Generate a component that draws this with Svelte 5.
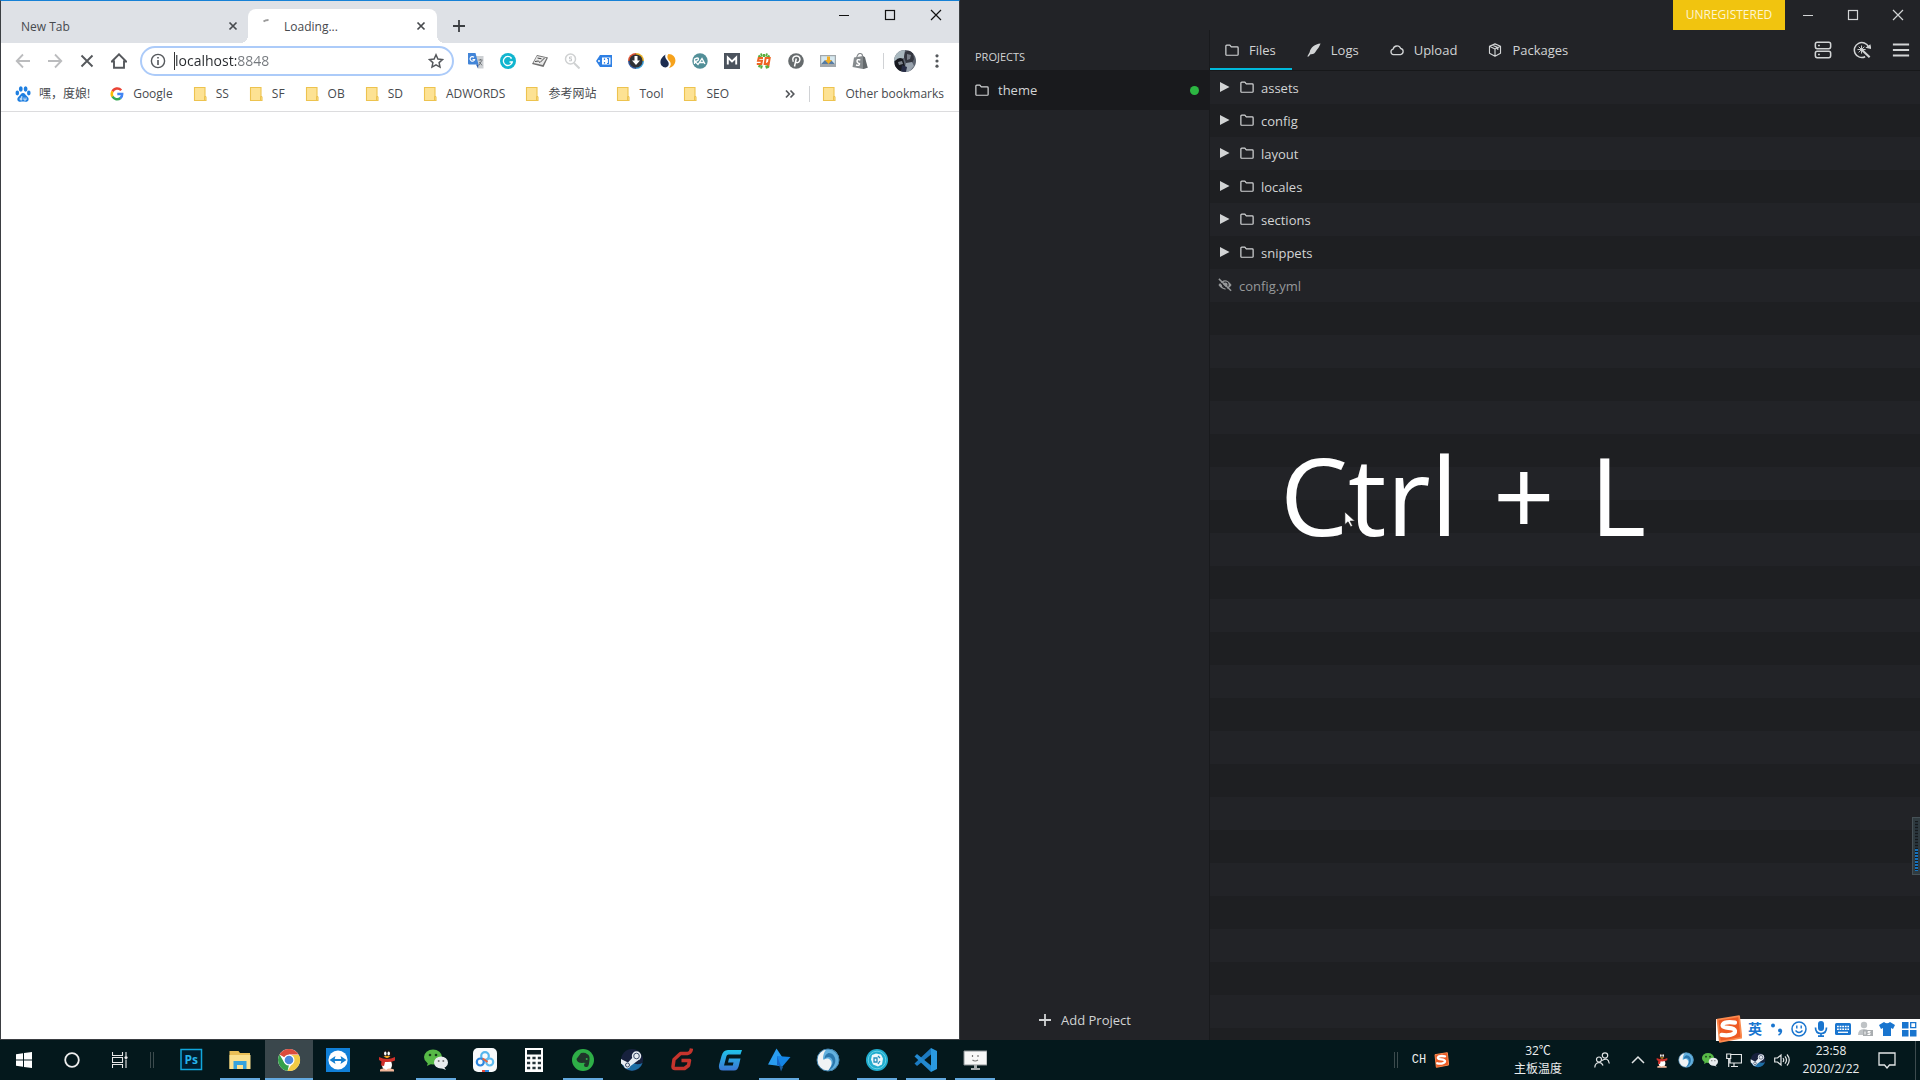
<script lang="ts">
  type Glyph = { box: number; art: string };

  const qq = '<ellipse cx="12" cy="8" rx="5.5" ry="6.5" fill="#151515"/><ellipse cx="12" cy="15" rx="7" ry="7" fill="#151515"/><ellipse cx="12" cy="17" rx="5" ry="5.5" fill="#fff"/><ellipse cx="10.3" cy="5.4" rx="1.2" ry="2" fill="#fff"/><ellipse cx="13.7" cy="5.4" rx="1.2" ry="2" fill="#fff"/><path d="M8.500 8.500q3.500-1.500 7 0l-3.500 1.800z" fill="#f6a623"/><path d="M4 9q8 4 16 0v3.500q-4 2-10 1.500l-1 4-3-.5.500-4L4 12z" fill="#d0302a"/><path d="M5 21.500q4-2 6 .5 3-2.500 8-.5v2H5z" fill="#f3b79a"/>';
  const wechat = '<ellipse cx="9" cy="9" rx="9" ry="7.500" fill="#57b947"/><path d="M4 14l-1 4 4-2z" fill="#57b947"/><circle cx="6" cy="7" r="1.300" fill="#163b18"/><circle cx="12" cy="7" r="1.300" fill="#163b18"/><ellipse cx="17" cy="14.500" rx="7" ry="6" fill="#e9ecee"/><path d="M20 19l2 3-5-2z" fill="#e9ecee"/><circle cx="14.700" cy="13" r="1" fill="#777"/><circle cx="19.300" cy="13" r="1" fill="#777"/>';
  const steam = '<circle cx="12" cy="12" r="11" fill="#17213d"/><path d="M1.500 15a11 11 0 0 0 21 0q-6 3-10-1z" fill="#1d6ea5"/><path d="M1 11l7 3.500 6-6.500 4 4.500-7.500 5.500a3.500 3.500 0 0 1-6.800-.5L1 15.500z" fill="#e8edf2"/><circle cx="16.500" cy="8" r="4.700" fill="#e8edf2"/><circle cx="16.500" cy="8" r="2.800" fill="none" stroke="#3b4a66" stroke-width="1"/><circle cx="7.500" cy="17" r="2" fill="none" stroke="#3b4a66"/>';
  const wave = '<circle cx="12" cy="12" r="11" fill="#f1f3f4"/><path d="M10 1.500C19-1 26 8 22 16.500 19 23 14 23 12 23c4-5 5-10 1-12-3-1.500-4 1-6 .5C7 6 9 3 10 1.500z" fill="#63b1df"/><path d="M12.500 5c5 0 8 5 6.500 10-1 3-3 6-7 8 5-6 6-10 3-13-2-2-5-1-6.500 1 0-3 1.500-5 4-6z" fill="#2a77ad"/><circle cx="12" cy="12" r="11" fill="none" stroke="#3c7ea9" stroke-width="1"/>';
  const sogou = '<path d="M3 4 21.500 1l2 18.500L5 23z" fill="#ee5a24" stroke="#fa8a4f" stroke-width="1.500" stroke-linejoin="round"/><path d="M18 6.500C10 5 6.500 7.500 7.500 9.500c1 2.500 10 .5 10.500 4 .4 3.500-6 4.500-11.500 3.500" fill="none" stroke="#fff" stroke-width="3.600" stroke-linecap="round"/>';

  const icons: Record<string, Glyph> = {
    folder: { box: 16, art: '<path d="M1 13V3.500Q1 2.500 2 2.500h3.500l1.700 2H14q1 0 1 1V13q0 1-1 1H2q-1 0-1-1z" fill="none" stroke="currentColor" stroke-width="1.400"/>' },
    feather: { box: 16, art: '<path d="M15.500.5C9 1 4 5 3 10.500L.3 15.500h1.600L4 12.800c3.500.2 5-1 6-3 .8-1.500 1.500-2 2.500-3.500 1.300-1.800 2-3.500 3-5.800z" fill="currentColor"/>' },
    cloud: { box: 16, art: '<path d="M4 13.200a3.200 3.200 0 0 1-.4-6.300 4.500 4.500 0 0 1 8.600-.6 3.500 3.500 0 0 1-.2 6.900z" fill="none" stroke="currentColor" stroke-width="1.500"/>' },
    cube: { box: 16, art: '<path d="M8 1l6.300 2.700v8L8 15.200l-6.300-3.500v-8zM1.700 3.700 8 6.800l6.300-3.100M8 6.800v8.400M4.800 2.300l6.400 3V8" fill="none" stroke="currentColor" stroke-width="1.300" stroke-linejoin="round"/>' },
    server: { box: 20, art: '<rect x="1.500" y="1.500" width="17" height="7" rx="2" fill="none" stroke="currentColor" stroke-width="1.700"/><rect x="1.500" y="11.500" width="17" height="7" rx="2" fill="none" stroke="currentColor" stroke-width="1.700"/><path d="M4.500 5h2M4.500 15h2" stroke="currentColor" stroke-width="1.500"/>' },
    refresh: { box: 20, art: '<path d="M13.500 17.500A8.300 8.300 0 1 1 17.300 6.500" fill="none" stroke="currentColor" stroke-width="1.700"/><path d="M13.800 7.500 20.500 9 19.300 3.500z" fill="currentColor"/><path d="M9.500 5v9M5 9.500h9M6.300 6.300l6.400 6.400M12.700 6.300l-6.400 6.400" stroke="currentColor" stroke-width="1.100"/><path d="M10 10 18.500 18" stroke="currentColor" stroke-width="2.400"/>' },
    menu: { box: 20, art: '<path d="M1 4h18M1 10h18M1 16h18" stroke="currentColor" stroke-width="2.200"/>' },
    triangle: { box: 10, art: '<path d="M0 0l9.500 5L0 10z" fill="currentColor"/>' },
    hidden: { box: 16, art: '<path d="M.5 8q7.500-11 15 0-7.500 10-15 0z" fill="currentColor"/><circle cx="8.300" cy="7.800" r="3.300" fill="none" stroke="#222327" stroke-width="1.200"/><path d="M1 3.500 13 15.500" stroke="#222327" stroke-width="1.500"/><path d="M1 1 15 14.500" stroke="currentColor" stroke-width="1.600"/>' },
    plus: { box: 14, art: '<path d="M7 1v12M1 7h12" stroke="currentColor" stroke-width="1.800"/>' },
    minimize: { box: 12, art: '<path d="M1 6.500h10" stroke="currentColor" stroke-width="1"/>' },
    maximize: { box: 12, art: '<rect x="1.500" y="1.500" width="9" height="9" fill="none" stroke="currentColor" stroke-width="1.200"/>' },
    cross: { box: 12, art: '<path d="M1 1l10 10M11 1 1 11" stroke="currentColor" stroke-width="1.200"/>' },
    tabclose: { box: 12, art: '<path d="M2.500 2.500l7 7M9.500 2.500l-7 7" stroke="currentColor" stroke-width="1.700"/>' },
    spinner: { box: 16, art: '<path d="M5.500 3.500Q7.500 2 10.500 2" fill="none" stroke="#9a9a9a" stroke-width="1.800"/>' },
    back: { box: 16, art: '<path d="M15 8H2M8 1.500 1.700 8 8 14.500" fill="none" stroke="#bbbcbe" stroke-width="1.800"/>' },
    forward: { box: 16, art: '<path d="M1 8h13M8 1.500 14.300 8 8 14.500" fill="none" stroke="#bbbcbe" stroke-width="1.800"/>' },
    stop: { box: 16, art: '<path d="M2.500 2.500l11 11M13.500 2.500l-11 11" stroke="#55585c" stroke-width="1.900"/>' },
    home: { box: 16, art: '<path d="M.8 8.500 8 1.300l7.200 7.200H13v6.300H3V8.500z" fill="none" stroke="#55585c" stroke-width="1.900"/>' },
    info: { box: 16, art: '<circle cx="8" cy="8" r="6.600" fill="none" stroke="#55585c" stroke-width="1.400"/><path d="M8 7v5M8 4v1.600" stroke="#55585c" stroke-width="1.600"/>' },
    star: { box: 16, art: '<path d="M8 1.800l1.900 4.200 4.600.5-3.400 3.100.9 4.500L8 11.800 4 14.100l.9-4.500L1.500 6.500 6.100 6z" fill="none" stroke="#55585c" stroke-width="1.500"/>' },
    dots: { box: 16, art: '<circle cx="8" cy="2.800" r="1.600" fill="#55585c"/><circle cx="8" cy="8" r="1.600" fill="#55585c"/><circle cx="8" cy="13.200" r="1.600" fill="#55585c"/>' },
    more: { box: 16, art: '<path d="M4 4.500 7.300 8 4 11.500M8.500 4.500 11.800 8l-3.300 3.500" fill="none" stroke="#55585c" stroke-width="1.700"/>' },
    paw: { box: 16, art: '<g fill="#1f7fe0"><ellipse cx="5.800" cy="3" rx="1.900" ry="2.700"/><ellipse cx="10.600" cy="3" rx="1.900" ry="2.700"/><ellipse cx="2.300" cy="7" rx="1.800" ry="2.400"/><ellipse cx="13.800" cy="7" rx="1.800" ry="2.400"/><path d="M8 7c2 0 2.500 2 4 3.200 3 2.500 1.500 5.800-1.500 5.500-2-.2-3-.2-5 0-3 .3-4.500-3-1.500-5.500C5.500 9 6 7 8 7z"/></g><path d="M6.800 10v4H5.500q-1-1 0-2h1.300M9 11.500V14h2v-2.500" fill="none" stroke="#fff" stroke-width=".8"/>' },
    google: { box: 16, art: '<g fill="none" stroke-width="2.500"><path d="M12.200 4.200A5.200 5.200 0 0 0 3.500 5.500" stroke="#ea4335"/><path d="M3.500 5.300a5.400 5.400 0 0 0 0 5.400" stroke="#fbbc05"/><path d="M3.500 10.500a5.200 5.200 0 0 0 8 1.500" stroke="#34a853"/><path d="M11.300 12.200A5.200 5.200 0 0 0 13.200 8H8.300" stroke="#4285f4"/></g>' },
    bookmark: { box: 16, art: '<path d="M2.500 1.500h10.500v9l1 .5v3.500H2.500z" fill="#fde293" stroke="#edc34f" stroke-width="1.100"/><path d="M14 10.500h-1.500v4" fill="none" stroke="#edc34f"/>' },
    translate: { box: 16, art: '<path d="M7 3h8.500v12.500H10z" fill="#cdd0d3"/><path d="M0 0h7.500l3 11.500H1q-1 0-1-1z" fill="#4285d8"/><path d="M10.500 11.500 8 11.500 10 15.500z" fill="#2b5caa"/><path d="M6 4.200a2.300 2.300 0 1 0 .6 2.300H4.500" fill="none" stroke="#fff" stroke-width="1.200"/><path d="M10.500 7h4M12.500 6v1M13.800 7.500l-3 5M11.300 9l2.700 3.300" stroke="#6b6f73" stroke-width=".9"/>' },
    grammar: { box: 16, art: '<circle cx="8" cy="8" r="8" fill="#11b5cf"/><path d="M11.300 5A4.500 4.500 0 1 0 12.300 9H9.500M11 4v2" fill="none" stroke="#fff" stroke-width="1.300"/>' },
    kitbox: { box: 16, art: '<path d="M5 2 16 4.500 11.500 14 0 11z" fill="#6f6f6f"/><path d="M5 3 14.500 5 10.700 12 1.500 10z" fill="#e9e9e9"/><path d="M3 8.500q4-1.500 5 1L12.500 5M5.500 5l4 .8" fill="none" stroke="#444" stroke-width="1"/>' },
    search: { box: 16, art: '<circle cx="6.500" cy="6" r="5" fill="none" stroke="#cfd1d2" stroke-width="1.500"/><path d="M10 10l5.500 5.500" stroke="#cfd1d2" stroke-width="2"/><path d="M8 4H5.500v1.800h2v2H5" fill="none" stroke="#c4c6c8"/>' },
    tag: { box: 16, art: '<path d="M4 2h12v12H4L0 8z" fill="#2f80e4"/><circle cx="3" cy="8" r="1" fill="#fff"/><path d="M6 4.500h8.500v7H6z" fill="#fff"/><path d="M8.500 5.500v1.500M8.500 9v1.500M11 5.500h1.500v5H11" fill="none" stroke="#2f80e4" stroke-width="1.200"/>' },
    download: { box: 16, art: '<path d="M8 0a8 8 0 0 1 8 8H8z" fill="#e6af25"/><path d="M16 8a8 8 0 0 1-8 8V8z" fill="#3fa0d8"/><path d="M0 8a8 8 0 0 1 8-8v8z" fill="#d95232"/><path d="M8 16a8 8 0 0 1-8-8h8z" fill="#35599d"/><circle cx="8" cy="8" r="6.600" fill="#2f3136"/><path d="M6.500 3h3v4.500H12L8 12 4 7.500h2.500z" fill="#fff"/>' },
    swirl: { box: 16, art: '<path d="M5.500 1.500C4 5.500 7.500 7 8.500 9.500c.8 2.500-.5 4.500-3 5C-.5 14-2 6 5.500 1.500z" fill="#1d2d50"/><path d="M8.500 1C15 1 17.500 8 13.500 12.500 12 14 10 15 9 15c3-3.500 1.500-6 0-7.500S6.500 3 8.500 1z" fill="#f6a21c"/>' },
    rank: { box: 16, art: '<circle cx="8" cy="8" r="7.700" fill="#528f98"/><path d="M2.500 11V6q4-2 4 0T3 8.500l3 3 4-6 3 5.500M7 9.500h5" fill="none" stroke="#fff" stroke-width="1.300"/>' },
    moz: { box: 16, art: '<path d="M0 0h16v16H0z" fill="#4b535d"/><path d="M3.800 11.500v-7L8 8.500l4.200-4v7" fill="none" stroke="#fff" stroke-width="1.900"/>' },
    quake: { box: 16, art: '<path d="M5 .5l1 3M11 .5l-1 3M8 1v3M2.500 2.500l2 2M13.500 2.500l-2 2M5 15.500l1-3M11 15.500l-1-3M2.500 14l2-2M13 14.500l-2-2" stroke="#57ad3c" stroke-width="2"/><path d="M7 5H2.700L2 7.700h4L5.300 11H.8" fill="none" stroke="#ee6523" stroke-width="2"/><path d="M9.700 5h4l-1 6H8.700z" fill="#fff" stroke="#ee6523" stroke-width="2"/><path d="M11 9.500l2 3.500" stroke="#ee6523" stroke-width="1.600"/>' },
    pin: { box: 16, art: '<circle cx="8" cy="8" r="7.800" fill="#666b6d"/><path d="M5.300 8.800C3.500 5 6 3 8.500 3c3 0 4.200 2.500 3 5-1 2-3 2-3.500 1M8.300 5.500 6.500 13.500" fill="none" stroke="#fff" stroke-width="1.500"/>' },
    photo: { box: 16, art: '<path d="M0 2h16v12H0z" fill="#a2a8ac"/><path d="M1.200 3.200h13.600V11H1.200z" fill="#d6e8ef"/><path d="M1.200 11 5 7l3 2 3-2 3.800 4z" fill="#577ca3"/><path d="M7 3.500h3V7h2L8.500 11 5 7h2z" fill="#f3ae25"/>' },
    bag: { box: 16, art: '<path d="M2 4.500 11 3l4.500 11.500L11 16 .5 14z" fill="#868b8e"/><path d="M11 3l2 1.300 2.700 10.500L11 16z" fill="#64696c"/><path d="M4.500 5Q6 0 8.500.5T10.500 4" fill="none" stroke="#868b8e" stroke-width="1.200"/><path d="M8.300 7Q5 6 5 8t2.500 2.700q0 2.500-3.500 1.300" fill="none" stroke="#fff" stroke-width="1.400"/>' },
    avatar: { box: 22, art: '<defs><clipPath id="face"><circle cx="11" cy="11" r="11"/></clipPath></defs><g clip-path="url(#face)"><path d="M0 0h22v22H0z" fill="#5d6470"/><path d="M0 0h11L10 8 0 11z" fill="#a9b8bf"/><path d="M11 2q5-3 8 1l1 6-3 6-5-2-2-6z" fill="#343740"/><path d="M13 4l4 1-1 4-3 1z" fill="#7a808a"/><path d="M1 11q4-5 8-2l2 7-5 6H0z" fill="#17191f"/><path d="M4 12l4-1 1 3-4 1z" fill="#7d838b"/><path d="M12 13l6-1 2 4-5 6h-5z" fill="#99a3ae"/><path d="M8 15l5 2-1 5H7z" fill="#262b44"/></g>' },
    windows: { box: 16, art: '<path d="M0 2.300 7 1.300v6.300H0zM8 1.100 16 0v7.600H8zM0 8.500h7v6.300l-7-1zM8 8.500h8V16l-8-1.100z" fill="#fff"/>' },
    cortana: { box: 16, art: '<circle cx="8" cy="8" r="6.800" fill="none" stroke="#eee" stroke-width="1.800"/>' },
    taskview: { box: 16, art: '<path d="M.5 0v3.500h10V0M.5 16v-3.500h10V16M.5 5.500h10v5H.5zM14 0v4M14 7.500V16" fill="none" stroke="#e7e7e7" stroke-width="1.100"/><circle cx="14" cy="5.500" r="1.600" fill="#e7e7e7"/>' },
    ps: { box: 24, art: '<rect x="2" y="1.500" width="20.500" height="20" fill="#001d2e" stroke="#11a6dc" stroke-width="1.500"/><text x="12.200" y="16" font-size="12" font-weight="700" font-family="Open Sans,sans-serif" text-anchor="middle" fill="#26b4ea">Ps</text>' },
    explorer: { box: 24, art: '<path d="M1.500 3h9l1.500 2h10v16h-20.500z" fill="#eabf57"/><path d="M1.500 7h21v14h-21z" fill="#fbe08e"/><path d="M5.500 21v-8h13v8H15v-4H9v4z" fill="#35a2dd"/>' },
    chrome: { box: 24, art: '<circle cx="12" cy="12" r="11" fill="#fff"/><path d="M12 12 2.500 6.500A11 11 0 0 1 21.500 6.500H12z" fill="#dc4b3d"/><path d="M2.500 6.500 7.500 15 12 17 10.500 22.900A11 11 0 0 1 2.500 6.500z" fill="#35a04a"/><path d="M12 7h9.800a11 11 0 0 1-11.300 15.900L16.500 13z" fill="#f2cb45"/><path d="M12 6.500a5.500 5.500 0 1 0 0 11 5.500 5.500 0 1 0 0-11z" fill="#fff"/><circle cx="12" cy="12" r="4.300" fill="#4c87dc"/>' },
    teamviewer: { box: 24, art: '<path d="M0 0h24v24H0z" fill="#107fd7"/><circle cx="12" cy="12" r="9.600" fill="#fff"/><path d="M3.500 12l6-4-.8 3h6.600l-.8-3 6 4-6 4 .8-3H8.700l.8 3z" fill="#157fcf"/>' },
    qq: { box: 24, art: qq },
    wechat: { box: 24, art: wechat },
    baidu: { box: 24, art: '<rect width="24" height="24" rx="5" fill="#f8fafb"/><circle cx="12" cy="8" r="3.800" fill="none" stroke="#55b6ed" stroke-width="2.200"/><circle cx="7.300" cy="14" r="3.500" fill="none" stroke="#2d86de" stroke-width="2.200"/><circle cx="16.700" cy="14" r="3.500" fill="none" stroke="#62bdf0" stroke-width="2.200"/><path d="M9.500 10.500 12 12l2.500 2" fill="none" stroke="#e7653c" stroke-width="2"/><path d="M9 23h3" stroke="#e74a38" stroke-width="2"/><path d="M12 23h4" stroke="#2d86de" stroke-width="2"/>' },
    calculator: { box: 24, art: '<path d="M3 0h18v24H3z" fill="#fff"/><path d="M5 2h14v4.500H5z" fill="#0a1a20"/><path d="M5 10h14M5 15h14M5 20h14" stroke="#26343a" stroke-width="2.500" stroke-dasharray="3.200 2.200"/>' },
    evernote: { box: 24, art: '<circle cx="12" cy="12" r="11" fill="#2eae47"/><path d="M7 9l3-4q4-1 6 1 3 1 2.500 6T17 18.500q-4 1.500-4-1.500 0-2 2-2-3-.5-4 0-5 0-5.500-4z" fill="#20352b"/><circle cx="15.700" cy="11" r="1" fill="#2eae47"/>' },
    steam: { box: 24, art: steam },
    gred: { box: 24, art: '<path d="M22.500.5Q22 5 18.500 5.500H11.500L5 11.500 4 18.500q0 2 2 2h9.500l4-3 1-5H12.500" fill="none" stroke="#c5342d" stroke-width="3.500" stroke-linejoin="round"/>' },
    gblue: { box: 24, art: '<defs><linearGradient id="gb" x1="0" y1="0" x2="0" y2="1"><stop offset="0" stop-color="#20c3e9"/><stop offset="1" stop-color="#3b77d4"/></linearGradient></defs><path d="M24 2H10Q5 2 3.500 8L1 17q-1 5.500 4 5.500h11q4 0 5-5.500l1.500-6.500H11l-1 4h5.500l-.7 3H6L8.500 8q.4-1.500 2-1.500H22.500z" fill="url(#gb)"/>' },
    bird: { box: 24, art: '<path d="M9.500.5l6 9L13 18 1 16.500z" fill="#2a9df0"/><path d="M10 8l13.500 1-8.500 10-5-2z" fill="#1485e6"/><path d="M10 8l4 10-4-1z" fill="#1667c9"/><path d="M12 17l4 2-2 4.500z" fill="#1b5c9c"/>' },
    wave: { box: 24, art: wave },
    disc: { box: 24, art: '<circle cx="12" cy="12" r="11" fill="#20adcf"/><circle cx="12" cy="12" r="8.800" fill="none" stroke="#66d1e5" stroke-width="1"/><path d="M7 7l4-1.500 5 1 2 4-1 6-4 2-5-2-2-5z" fill="#ecf7fb"/><path d="M9 10h3v4H9zM13 8l2 2M13 16l2-3" fill="none" stroke="#258fbc" stroke-width="1.300"/>' },
    vscode: { box: 24, art: '<path d="M17 0 23 3v18l-6 3z" fill="#2a99e0"/><path d="M17 0v6.500L3 18 .5 15.500z" fill="#1c7ac0"/><path d="M17 24v-6.500L3 6 .5 8.500z" fill="#2389d0"/>' },
    monitor: { box: 24, art: '<path d="M1 3h23v14H1z" fill="#f7f7f7" stroke="#8c9295"/><path d="M9.500 7v2M15 7v2M9.500 12q2.500 2 5.500 0" fill="none" stroke="#777" stroke-width="1.200"/><path d="M11 17h3v3h3v2H8v-2h3z" fill="#a5aaac"/>' },
    sogou: { box: 24, art: sogou },
    people: { box: 16, art: '<g fill="none" stroke="#e2e5e6" stroke-width="1.200"><circle cx="5" cy="7.500" r="2.500"/><path d="M.8 15.500Q1 11 5 10.500q3 0 4 3"/><circle cx="11" cy="3.500" r="2.700"/><path d="M8 8.500q6-4 7.300 3"/></g>' },
    chevron: { box: 16, art: '<path d="M2 11l6-6 6 6" fill="none" stroke="#e2e5e6" stroke-width="1.500"/>' },
    network: { box: 16, art: '<path d="M5 2.500h10.500v8.500H4V7M8 11v3.500M5 14.500h7M.7 2h4v4.500h-4zM2.700 6.500V15" fill="none" stroke="#e2e5e6" stroke-width="1.200"/>' },
    speaker: { box: 16, art: '<path d="M.7 6h2.800L7 3v10L3.500 10H.7zM9 6q1.500 2 0 4M11 4.300q3 3.700 0 7.400M13 2.500q4.500 5.500 0 11" fill="none" stroke="#e2e5e6" stroke-width="1.200"/>' },
    notice: { box: 18, art: '<path d="M1 2h16v12h-5.500L9 17l-2.500-3H1z" fill="none" stroke="#e2e5e6" stroke-width="1.300"/>' },
    punctuation: { box: 16, art: '<circle cx="4" cy="4.500" r="2" fill="#1975cf"/><circle cx="11" cy="9.500" r="2" fill="#1975cf"/><path d="M12.500 9.500q0 3-3 4.500" fill="none" stroke="#1975cf" stroke-width="1.500"/>' },
    smile: { box: 16, art: '<circle cx="8" cy="8" r="7" fill="none" stroke="#1975cf" stroke-width="1.500"/><path d="M5.800 4.500v3M10.200 4.500v3M4.500 9.500q3.500 4 7 0" fill="none" stroke="#1975cf" stroke-width="1.400"/>' },
    mic: { box: 16, art: '<rect x="5" y="0" width="6" height="10" rx="3" fill="#1975cf"/><path d="M2.500 6.500q0 6 5.500 6t5.500-6M8 12v3M5 15.200h6" fill="none" stroke="#1975cf" stroke-width="1.700"/>' },
    keyboard: { box: 16, art: '<rect y="2" width="16" height="12" rx="1.500" fill="#1975cf"/><path d="M2 5.500h12M2 8.200h12" stroke="#fff" stroke-width="1.500" stroke-dasharray="1.800 .8"/><path d="M3 11.300h10" stroke="#fff" stroke-width="1.300"/>' },
    person: { box: 16, art: '<circle cx="7" cy="4" r="3.200" fill="#bfc3c6"/><path d="M1 14q0-6 6-6t6 6z" fill="#bfc3c6"/><rect x="6" y="9" width="10" height="6" fill="#a9adb0"/><path d="M8 10.500v3M13.500 10.500H11v1.300h2v1.700h-2.500" fill="none" stroke="#fff"/>' },
    shirt: { box: 16, art: '<path d="M5 1q3 2.500 6 0l5 3-2 4-2-1v8H4V7L2 8 0 4z" fill="#1975cf"/>' },
    grid: { box: 16, art: '<path d="M1 1h6.500v6.500H1zM1 9h6.500v6.500H1zM9 9h6.500v6.500H9z" fill="#1975cf"/><path d="M9.700 1.700h5v5h-5z" fill="none" stroke="#1975cf" stroke-width="1.300"/>' },
    cursor: { box: 20, art: '<path d="M1 1v14l3.500-3 3 5.500 2-1-2.700-5.300H12z" fill="#fff" stroke="#222" stroke-width=".7"/>' }
  };

  const extensions = [
    ['translate', 'Translate'], ['grammar', 'Grammar check'], ['kitbox', 'Toolkit'], ['search', 'Keyword search'],
    ['tag', 'Tag assistant'], ['download', 'Downloader'], ['swirl', 'Site traffic'], ['rank', 'Rank checker'],
    ['moz', 'Moz'], ['quake', 'SEO overview'], ['pin', 'Pinterest'], ['photo', 'Image saver'], ['bag', 'Shopify']
  ];
  const bookmarks = [
    ['paw', '嘿，度娘!'], ['google', 'Google'], ['bookmark', 'SS'], ['bookmark', 'SF'], ['bookmark', 'OB'],
    ['bookmark', 'SD'], ['bookmark', 'ADWORDS'], ['bookmark', '参考网站'], ['bookmark', 'Tool'], ['bookmark', 'SEO']
  ];
  const views = [['folder', 'Files'], ['feather', 'Logs'], ['cloud', 'Upload'], ['cube', 'Packages']];
  const folders = ['assets', 'config', 'layout', 'locales', 'sections', 'snippets'];
  const apps = [
    { icon: 'ps', name: 'Photoshop', state: '' }, { icon: 'explorer', name: 'File Explorer', state: 'open' },
    { icon: 'chrome', name: 'Chrome', state: 'open active' }, { icon: 'teamviewer', name: 'TeamViewer', state: '' },
    { icon: 'qq', name: 'QQ', state: '' }, { icon: 'wechat', name: 'WeChat', state: 'open' },
    { icon: 'baidu', name: 'Baidu Netdisk', state: '' }, { icon: 'calculator', name: 'Calculator', state: '' },
    { icon: 'evernote', name: 'Evernote', state: 'open' }, { icon: 'steam', name: 'Steam', state: '' },
    { icon: 'gred', name: 'Game client', state: '' }, { icon: 'gblue', name: 'Game booster', state: '' },
    { icon: 'bird', name: 'Mail', state: 'open' }, { icon: 'wave', name: 'Browser', state: '' },
    { icon: 'disc', name: 'Prepros', state: 'open' }, { icon: 'vscode', name: 'Visual Studio Code', state: 'open' },
    { icon: 'monitor', name: 'Screen recorder', state: 'open' }
  ];
  const tray = [['chevron', 'Show hidden icons'], ['qq', 'QQ'], ['wave', 'Browser'], ['wechat', 'WeChat'], ['network', 'Network'], ['steam', 'Steam'], ['speaker', 'Volume']];
  const imeTools = [['punctuation', 'Punctuation'], ['smile', 'Emoji'], ['mic', 'Voice input'], ['keyboard', 'Keyboard'], ['person', 'Account'], ['shirt', 'Skins'], ['grid', 'Toolbox']];

  let address = $state('localhost:8848');
  let view = $state('Files');
</script>

{#snippet icon(name: string, size = 's16')}
  <svg class="icon {size}" viewBox="0 0 {icons[name].box} {icons[name].box}" aria-hidden="true">{@html icons[name].art}</svg>
{/snippet}

{#snippet windowButtons()}
  <div class="winbtns">
    <button aria-label="Minimize">{@render icon('minimize', 's12')}</button>
    <button aria-label="Maximize">{@render icon('maximize', 's12')}</button>
    <button aria-label="Close">{@render icon('cross', 's12')}</button>
  </div>
{/snippet}

<div class="desktop">
  <section class="browser">
    <div class="tabstrip">
      <div class="tab first">
        <button class="tabname">New Tab</button>
        <button class="x" aria-label="Close New Tab">{@render icon('tabclose', 's12')}</button>
      </div>
      <div class="tab current">
        {@render icon('spinner')}
        <button class="tabname">Loading...</button>
        <button class="x" aria-label="Close Loading">{@render icon('tabclose', 's12')}</button>
      </div>
      <button class="newtab" aria-label="New tab">{@render icon('plus', 's14')}</button>
      {@render windowButtons()}
    </div>

    <div class="toolbar">
      <button aria-label="Back">{@render icon('back')}</button>
      <button aria-label="Forward">{@render icon('forward')}</button>
      <button aria-label="Stop">{@render icon('stop')}</button>
      <button aria-label="Home">{@render icon('home')}</button>
      <div class="omnibox">
        {@render icon('info')}
        <span class="caret"></span>
        <input aria-label="Address" bind:value={address} spellcheck="false" />
        <button aria-label="Bookmark this page">{@render icon('star')}</button>
      </div>
      <div class="extensions">
        {#each extensions as [name, label]}
          <button aria-label={label}>{@render icon(name)}</button>
        {/each}
      </div>
      <span class="rule"></span>
      <button class="profile" aria-label="Profile">{@render icon('avatar', 's22')}</button>
      <button aria-label="Menu">{@render icon('dots')}</button>
    </div>

    <nav class="bookmarks">
      {#each bookmarks as [name, label]}
        <a href="#bookmark">{@render icon(name)}<span>{label}</span></a>
      {/each}
      <button class="more" aria-label="More bookmarks">{@render icon('more')}</button>
      <span class="rule"></span>
      <a href="#bookmark">{@render icon('bookmark')}<span>Other bookmarks</span></a>
    </nav>
    <main class="page"></main>
  </section>

  <section class="workbench">
    <header class="titlebar">
      <button class="badge">UNREGISTERED</button>
      {@render windowButtons()}
    </header>
    <aside class="sidebar">
      <h2>PROJECTS</h2>
      <button class="project">{@render icon('folder', 's14')}<span>theme</span><i class="dot"></i></button>
      <button class="add">{@render icon('plus', 's14')}<span>Add Project</span></button>
    </aside>
    <div class="content">
      <div class="views">
        {#each views as [name, label]}
          <button class:selected={view === label} onclick={() => (view = label)}>{@render icon(name, 's14')}<span>{label}</span></button>
        {/each}
        <div class="actions">
          <button aria-label="Server">{@render icon('server', 's18')}</button>
          <button aria-label="Reload">{@render icon('refresh', 's18')}</button>
          <button aria-label="Menu">{@render icon('menu', 's18')}</button>
        </div>
      </div>
      <div class="files">
        {#each folders as name}
          <button class="row">{@render icon('triangle', 's10')}{@render icon('folder', 's14')}<span>{name}</span></button>
        {/each}
        <button class="row muted">{@render icon('hidden', 's14')}<span>config.yml</span></button>
        <div class="shortcut"><span>Ctrl</span><span>+</span><span>L</span></div>
        <div class="pointer">{@render icon('cursor', 's18')}</div>
      </div>
    </div>
    <div class="meter"><span></span></div>
    <div class="ime">
      <div class="imelogo">{@render icon('sogou', 's28')}</div>
      <button class="lang">英</button>
      {#each imeTools as [name, label]}
        <button aria-label={label}>{@render icon(name)}</button>
      {/each}
    </div>
  </section>

  <footer class="taskbar">
    <button class="sys" aria-label="Start">{@render icon('windows')}</button>
    <button class="sys" aria-label="Cortana">{@render icon('cortana')}</button>
    <button class="sys" aria-label="Task View">{@render icon('taskview')}</button>
    <span class="grip"></span>
    <div class="apps">
      {#each apps as app}
        <button class="app {app.state}" aria-label={app.name}>{@render icon(app.icon, 's24')}</button>
      {/each}
    </div>
    <div class="status">
      <span class="grip"></span>
      <button class="ch">CH</button>
      <button class="sg" aria-label="Sogou">{@render icon('sogou')}</button>
      <div class="stack temp"><span>32℃</span><span>主板温度</span></div>
      <button class="people" aria-label="People">{@render icon('people')}</button>
      <div class="tray">
        {#each tray as [name, label]}
          <button aria-label={label}>{@render icon(name)}</button>
        {/each}
      </div>
      <div class="stack clock"><span>23:58</span><span>2020/2/22</span></div>
      <button class="notice" aria-label="Notifications">{@render icon('notice', 's18')}</button>
      <span class="peek"></span>
    </div>
  </footer>
</div>

<style>
  :global(body) { margin: 0; overflow: hidden; }
  .desktop {
    display: grid;
    grid-template: minmax(0, 1fr) 40px / minmax(0, 1fr) minmax(0, 1fr);
    height: 100vh;
    font: 13px/18px "Open Sans", "Noto Sans CJK SC", sans-serif;
    background: #222327;
  }
  button {
    display: flex;
    align-items: center;
    justify-content: center;
    flex: none;
    margin: 0;
    padding: 0;
    border: 0;
    background: none;
    color: inherit;
    font: inherit;
    white-space: nowrap;
  }
  .icon { display: block; flex: none; }
  .s10 { width: 10px; height: 10px; }
  .s12 { width: 12px; height: 12px; }
  .s14 { width: 14px; height: 14px; }
  .s16 { width: 16px; height: 16px; }
  .s18 { width: 18px; height: 18px; }
  .s22 { width: 22px; height: 22px; }
  .s24 { width: 24px; height: 24px; }
  .s28 { width: 28px; height: 28px; }

  .browser {
    display: flex;
    flex-direction: column;
    min-width: 0;
    border: 1px solid #3b3e42;
    border-top-color: #1681d6;
    background: #fff;
    color: #474a4e;
  }
  .tabstrip { display: flex; align-items: flex-end; height: 42px; background: #dee1e6; }
  .tab { display: flex; align-items: center; box-sizing: border-box; height: 34px; padding: 0 10px; font-size: 12px; }
  .tabname { flex: 1; justify-content: flex-start; padding-top: 2px; }
  .first { width: 247px; padding-left: 20px; padding-right: 9px; }
  .current { position: relative; width: 189px; gap: 10px; background: #fff; border-radius: 8px 8px 0 0; }
  .current::before, .current::after { content: ""; position: absolute; bottom: 0; width: 8px; height: 8px; }
  .current::before { right: 100%; background: radial-gradient(circle at 0 0, #dee1e6 8px, #fff 8px); }
  .current::after { left: 100%; background: radial-gradient(circle at 100% 0, #dee1e6 8px, #fff 8px); }
  .newtab { width: 44px; height: 34px; color: #3b3e42; }
  .winbtns { display: flex; height: 30px; }
  .winbtns button { width: 45px; }
  .tabstrip .winbtns { align-self: flex-start; margin-left: auto; color: #111; }
  .tabstrip .winbtns button { width: 46px; height: 28px; }

  .toolbar { display: flex; align-items: center; height: 36px; padding: 0 6px; }
  .toolbar > button { width: 32px; height: 32px; }
  .omnibox {
    display: flex;
    align-items: center;
    flex: 1;
    box-sizing: border-box;
    min-width: 0;
    height: 30px;
    margin-left: 5px;
    padding: 0 8px;
    border: 2px solid #accbf9;
    border-radius: 15px;
  }
  .caret { width: 1px; height: 18px; margin-left: 8px; background: #333; }
  .omnibox input {
    flex: 1;
    min-width: 0;
    padding: 0;
    border: 0;
    outline: 0;
    background: linear-gradient(90deg, #26292d 61px, #74787d 61px);
    background-clip: text;
    color: transparent;
    font: 14px/20px "Open Sans", sans-serif;
  }
  .extensions { display: flex; margin-left: 6px; }
  .extensions button { width: 32px; height: 32px; }
  .rule { width: 1px; height: 16px; background: #d0d2d5; }
  .extensions + .rule { margin: 0 5px 0 7px; }

  .bookmarks { display: flex; align-items: center; gap: 19px; height: 30px; padding: 0 15px 2px 14px; border-bottom: 1px solid #dcdcde; }
  .bookmarks a { display: flex; align-items: center; gap: 8px; color: inherit; text-decoration: none; white-space: nowrap; font-size: 12px; }
  .more { margin-left: auto; }
  .bookmarks .rule { margin: 0 -8px 0 -8px; }
  .page { flex: 1; background: #fff; }

  .workbench {
    position: relative;
    display: grid;
    grid-template: 30px minmax(0, 1fr) / 250px minmax(0, 1fr);
    min-width: 0;
    background: #222327;
    color: #d2d4d5;
  }
  .titlebar { grid-column: 1 / -1; display: flex; justify-content: flex-end; }
  .badge { width: 112px; background: #f1c40f; color: #fdf5d2; font-size: 12px; }
  .sidebar { display: flex; flex-direction: column; border-right: 1px solid #191a1d; }
  h2 { margin: 0; padding: 18px 15px 4px; font-size: 11px; line-height: 18px; font-weight: 400; }
  .project { height: 40px; gap: 9px; padding: 0 10px 0 15px; background: #191a1d; }
  .dot { width: 9px; height: 9px; margin-left: auto; border-radius: 50%; background: #2cb642; }
  .add { height: 40px; margin-top: auto; gap: 9px; }
  .content { display: flex; flex-direction: column; min-width: 0; }
  .views { display: flex; height: 40px; border-bottom: 1px solid #17181a; }
  .views > button { gap: 10px; box-sizing: border-box; padding: 0 16px 0 15px; border-top: 2px solid transparent; border-bottom: 2px solid transparent; }
  .views > .selected { border-bottom-color: #00b9da; }
  .actions { display: flex; margin-left: auto; }
  .actions button { width: 39px; }
  .files { position: relative; flex: 1; background: repeating-linear-gradient(#222327 0 33px, #1e1f22 33px 66px); }
  .row { justify-content: flex-start; width: 100%; height: 33px; padding-left: 10px; }
  .row .icon { margin-bottom: 2px; }
  .row .s10 { margin-right: 10px; }
  .row .s14 { margin-right: 7px; }
  .muted { padding-left: 8px; color: #96989a; }
  .shortcut {
    position: absolute;
    top: 349px;
    left: 70px;
    display: flex;
    gap: 35px;
    color: #fff;
    font-size: 108px;
    line-height: 150px;
  }
  .pointer { position: absolute; top: 440px; left: 134px; }
  .meter { position: absolute; right: 0; bottom: 165px; box-sizing: border-box; width: 8px; height: 58px; padding: 3px 2px; border: solid #465157; border-width: 1px 0 1px 1px; background: #303b40; }
  .meter span { display: block; height: 100%; background: repeating-linear-gradient(#15191c 0 1px, transparent 1px 3px), linear-gradient(#27323a 54%, #1672bd 54%); }
  .ime { position: absolute; right: 0; bottom: -1px; z-index: 2; display: flex; align-items: center; box-sizing: border-box; height: 22px; padding: 0 0 2px 28px; background: #fff; }
  .ime button { width: 22px; }
  .imelogo { position: absolute; left: -2px; top: -4px; }
  .lang { color: #1975cf; font-size: 14px; font-weight: 700; }

  .taskbar { grid-column: 1 / -1; display: flex; background: #04181c; color: #eceeee; font-size: 12px; }
  .sys { width: 48px; }
  .grip { align-self: center; box-sizing: border-box; width: 4px; height: 16px; border: solid #3d4b4e; border-width: 0 1px; }
  .sys + .grip { margin: 0 13px 0 6px; }
  .apps { display: flex; padding-left: 4px; }
  .app { box-sizing: border-box; width: 40px; margin-right: 9px; border-top: 2px solid transparent; border-bottom: 2px solid transparent; }
  .open { border-bottom-color: #63a9df; }
  .active { width: 48px; margin: 0 5px 0 -4px; background: #3a474c; border-top-color: #3a474c; }
  .status { display: flex; align-items: center; margin-left: auto; }
  .status button { height: 40px; }
  .ch { width: 24px; margin-left: 9px; font-family: "Liberation Mono", monospace; }
  .sg { width: 20px; }
  .stack { display: flex; flex-direction: column; align-items: center; line-height: 18px; }
  .temp { margin-left: 63px; }
  .people { width: 32px; margin-left: 24px; }
  .tray { display: flex; margin-left: 8px; }
  .tray button { width: 24px; }
  .clock { width: 74px; }
  .notice { width: 38px; }
  .peek { height: 40px; width: 4px; margin-left: 9px; border-left: 1px solid #3d4b4e; }
</style>
